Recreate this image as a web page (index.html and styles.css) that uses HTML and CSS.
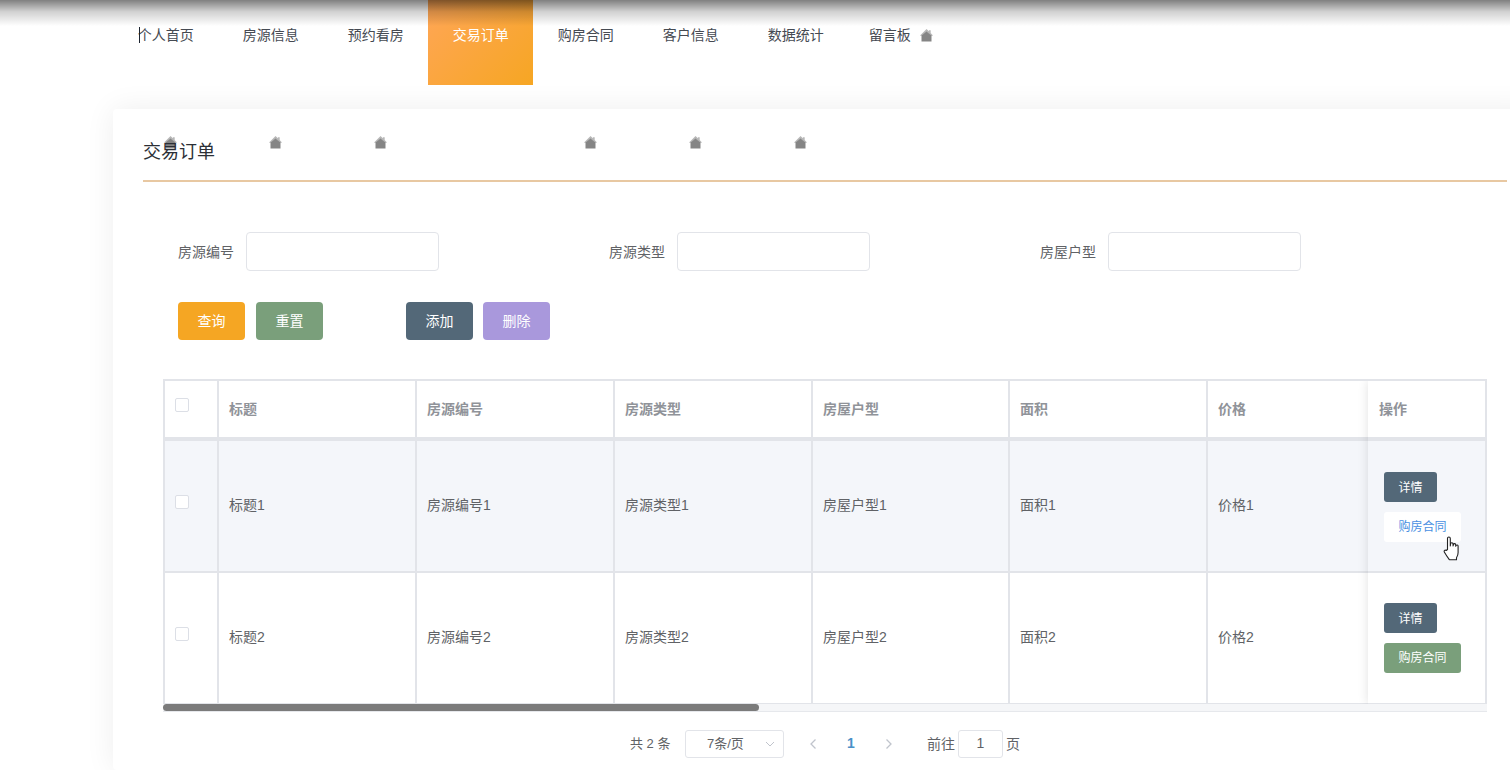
FILE: index.html
```html
<!DOCTYPE html>
<html lang="en">
<head>
  <meta charset="UTF-8">
  <title>交易订单</title>
  <link rel="stylesheet" href="styles.css">
</head>
<body>

  <!-- Navigation Bar -->
  <div class="navbar">
    <a href="#">个人首页</a>
    <a href="#">房源信息</a>
    <a href="#">预约看房</a>
    <a href="#" class="active">交易订单</a>
    <a href="#">购房合同</a>
    <a href="#">客户信息</a>
    <a href="#">数据统计</a>
    <a href="#">留言板<svg class="house nav-house" viewBox="0 0 13 13"><path class="roof" d="M6.5 0 9 2.300V1.200h1.700v2.700L13 6.500 11.500 7 6.500 3 1.500 7 0 6.500z"/><path class="walls" d="M1.500 6.500 6.500 2.500l5 4V12.500H1.500z"/></svg></a>
  </div>
  <div class="top-shade"></div>
  <div class="caret"></div>

  <div class="card">
    <!-- Stray menu icons -->
    <div class="icon-strip">
      <svg class="house" viewBox="0 0 13 13"><path class="roof" d="M6.5 0 9 2.300V1.200h1.700v2.700L13 6.500 11.500 7 6.500 3 1.500 7 0 6.500z"/><path class="walls" d="M1.500 6.500 6.500 2.500l5 4V12.500H1.500z"/></svg>
      <svg class="house" viewBox="0 0 13 13"><path class="roof" d="M6.5 0 9 2.300V1.200h1.700v2.700L13 6.500 11.500 7 6.500 3 1.500 7 0 6.500z"/><path class="walls" d="M1.500 6.500 6.500 2.500l5 4V12.500H1.500z"/></svg>
      <svg class="house" viewBox="0 0 13 13"><path class="roof" d="M6.5 0 9 2.300V1.200h1.700v2.700L13 6.500 11.500 7 6.500 3 1.500 7 0 6.500z"/><path class="walls" d="M1.500 6.500 6.500 2.500l5 4V12.500H1.500z"/></svg>
      <span class="house-gap"></span>
      <svg class="house" viewBox="0 0 13 13"><path class="roof" d="M6.5 0 9 2.300V1.200h1.700v2.700L13 6.500 11.500 7 6.500 3 1.500 7 0 6.500z"/><path class="walls" d="M1.500 6.500 6.500 2.500l5 4V12.500H1.500z"/></svg>
      <svg class="house" viewBox="0 0 13 13"><path class="roof" d="M6.5 0 9 2.300V1.200h1.700v2.700L13 6.500 11.500 7 6.500 3 1.500 7 0 6.500z"/><path class="walls" d="M1.500 6.500 6.500 2.500l5 4V12.500H1.500z"/></svg>
      <svg class="house" viewBox="0 0 13 13"><path class="roof" d="M6.5 0 9 2.300V1.200h1.700v2.700L13 6.500 11.500 7 6.500 3 1.500 7 0 6.500z"/><path class="walls" d="M1.500 6.500 6.500 2.500l5 4V12.500H1.500z"/></svg>
    </div>

    <h1 class="title">交易订单</h1>

    <div class="search-form">
      <div class="field"><label>房源编号</label><input type="text"></div>
      <div class="field"><label>房源类型</label><input type="text"></div>
      <div class="field"><label>房屋户型</label><input type="text"></div>
    </div>

    <div class="actions">
      <button class="btn btn-orange">查询</button>
      <button class="btn btn-green">重置</button>
      <button class="btn btn-slate push">添加</button>
      <button class="btn btn-purple">删除</button>
    </div>

    <div class="table-box">
      <div class="table-wrap">
        <table class="data-table">
          <colgroup>
            <col class="col-check"><col class="col-wide"><col class="col-wide"><col class="col-wide">
            <col class="col-area"><col class="col-wide"><col class="col-wide">
          </colgroup>
          <thead>
            <tr>
              <th class="check-cell"><span class="checkbox"></span></th>
              <th>标题</th><th>房源编号</th><th>房源类型</th><th>房屋户型</th><th>面积</th><th>价格</th>
            </tr>
          </thead>
          <tbody>
            <tr class="hover">
              <td class="check-cell"><span class="checkbox"></span></td>
              <td>标题1</td><td>房源编号1</td><td>房源类型1</td><td>房屋户型1</td><td>面积1</td><td>价格1</td>
            </tr>
            <tr>
              <td class="check-cell"><span class="checkbox"></span></td>
              <td>标题2</td><td>房源编号2</td><td>房源类型2</td><td>房屋户型2</td><td>面积2</td><td>价格2</td>
            </tr>
          </tbody>
        </table>

        <!-- Fixed right column -->
        <div class="fixed-col">
          <div class="fixed-head">操作</div>
          <div class="fixed-row hover">
            <button class="mini mini-slate">详情</button>
            <button class="mini mini-white">购房合同</button>
          </div>
          <div class="fixed-row">
            <button class="mini mini-slate">详情</button>
            <button class="mini mini-green">购房合同</button>
          </div>
        </div>
      </div>
      <div class="scrollbar"><div class="thumb"></div></div>

      <svg class="hand" viewBox="0 0 18 25">
        <path d="M5.500 13.500V2.500C5.500 1.600 6.100 1 6.900 1s1.400.6 1.400 1.500V10l.3-2.200c.2-1.600 2.400-1.400 2.400.2l.1 2 .3-1.400c.3-1.400 2.300-1.200 2.300.3v1.400l.4-.8c.5-.9 2-.6 2 .6v6.400c0 3-.8 4.100-1.600 5.200v2H7.500c-1-1.300-3-3.600-5.200-7.600-.7-1.300.7-2.600 1.900-1.600z" fill="#fff" stroke="#222" stroke-width="1.100" stroke-linejoin="round"/>
      </svg>
    </div>

    <div class="pagination">
      <span class="total">共 2 条</span>
      <div class="page-size">7条/页<svg class="chevron" viewBox="0 0 10 6"><path d="M1 1l4 4 4-4" fill="none" stroke="#c0c4cc" stroke-width="1"/></svg></div>
      <svg class="arrow" viewBox="0 0 8 12"><path d="M6.500 1.500 2 6l4.500 4.500" fill="none" stroke="#c0c4cc" stroke-width="1.300"/></svg>
      <span class="page-num">1</span>
      <svg class="arrow" viewBox="0 0 8 12"><path d="M1.500 1.500 6 6l-4.500 4.500" fill="none" stroke="#c0c4cc" stroke-width="1.300"/></svg>
      <span class="goto">前往</span>
      <div class="page-input">1</div>
      <span class="page-unit">页</span>
    </div>
  </div>

</body>
</html>
```

FILE: styles.css
```css
* {
  box-sizing: border-box;
  margin: 0;
  padding: 0;
  font-family: 'Liberation Sans', 'Noto Sans CJK SC', sans-serif;
}

html, body {
  height: 770px;
  overflow: hidden;
  background: #fff;
}

/* Navigation Bar */
.navbar {
  display: flex;
  height: 85px;
  padding-left: 113.3px;
}

.navbar a {
  display: block;
  width: 105px;
  height: 85px;
  line-height: 70px;
  text-align: center;
  font-size: 14px;
  color: #454a52;
  text-decoration: none;
}

.navbar a.active {
  color: #fff;
  background: linear-gradient(135deg, #ffa657, #f6a623);
}

.top-shade {
  position: absolute;
  top: 0;
  left: 0;
  width: 100%;
  height: 26px;
  background: linear-gradient(to bottom, rgba(0, 0, 0, 0.5), rgba(0, 0, 0, 0.18) 45%, rgba(0, 0, 0, 0));
  pointer-events: none;
}

.caret {
  position: absolute;
  top: 27px;
  left: 139px;
  width: 1px;
  height: 16px;
  background: #1c2430;
}

/* House icons */
.house {
  width: 13px;
  height: 13px;
  display: block;
}

.house .roof {
  fill: #b8b8b8;
}

.house .walls {
  fill: #858585;
}

.nav-house {
  display: inline-block;
  margin-left: 9px;
  vertical-align: -2px;
}

.icon-strip {
  position: absolute;
  top: 27px;
  left: 51px;
  display: flex;
  gap: 92px;
}

.house-gap {
  width: 13px;
}

/* Card */
.card {
  position: relative;
  width: 1424px;
  height: 661px;
  margin: 24px 0 0 113px;
  padding: 0 30px;
  background: #fff;
  border-radius: 4px;
  box-shadow: 0 0 30px rgba(0, 0, 0, 0.07);
}

.title {
  position: relative;
  height: 73px;
  padding-top: 29px;
  border-bottom: 2px solid #e8c8a2;
  font-size: 18px;
  line-height: 29px;
  font-weight: normal;
  color: #2b2f36;
}

.search-form {
  display: flex;
  gap: 170px;
  margin-top: 50px;
  padding-left: 35px;
}

.field {
  display: flex;
  align-items: center;
  gap: 12px;
}

.field label {
  width: 56px;
  margin-bottom: 2px;
  font-size: 14px;
  color: #606266;
}

.field input {
  width: 193px;
  height: 39px;
  border: 1px solid #e2e4e9;
  border-radius: 4px;
  background: #fff;
}

.actions {
  display: flex;
  gap: 11px;
  margin-top: 31px;
  padding-left: 35px;
}

.btn {
  width: 67px;
  height: 38px;
  padding-bottom: 2px;
  border: none;
  border-radius: 4px;
  color: #fff;
  font-size: 14px;
}

.btn.push {
  margin-left: 72px;
}

.btn-orange { background: #f5a623; }
.btn-green { background: #7a9f7b; }
.btn-slate { background: #536878; }
.btn-purple { background: #a998dc; margin-left: -1px; }

/* Table */
.table-box {
  position: relative;
  width: 1324px;
  margin: 39px 0 0 20px;
}

.table-wrap {
  position: relative;
  height: 325px;
  overflow: hidden;
  border-top: 2px solid #e2e4e9;
  border-left: 2px solid #e2e4e9;
  border-right: 2px solid #e2e4e9;
}

.data-table {
  width: 1241px;
  table-layout: fixed;
  border-collapse: separate;
  border-spacing: 0;
  font-size: 14px;
}

.col-check { width: 54px; }
.col-wide { width: 198px; }
.col-area { width: 197px; }

.data-table th,
.data-table td {
  padding-left: 10px;
  text-align: left;
  border-right: 2px solid #e2e4e9;
}

.data-table th {
  height: 60px;
  padding-bottom: 2px;
  color: #909399;
  font-weight: bold;
  border-bottom: 4px solid #e2e4e9;
}

.data-table td {
  height: 132px;
  padding-bottom: 4px;
  color: #606266;
  border-bottom: 2px solid #e2e4e9;
}

.data-table th.check-cell,
.data-table td.check-cell {
  padding: 0 19px 0 0;
  text-align: center;
}

.data-table td.check-cell {
  padding-bottom: 1px;
}

.checkbox {
  display: inline-block;
  width: 14px;
  height: 14px;
  margin-bottom: 8px;
  background: #fff;
  border: 1px solid #dcdfe6;
  border-radius: 2px;
  vertical-align: middle;
}

.hover td,
.fixed-row.hover {
  background: #f4f6fa;
}

.fixed-col {
  position: absolute;
  top: 0;
  right: 0;
  width: 117px;
  height: 323px;
  background: #fff;
  box-shadow: 0 0 10px rgba(0, 0, 0, 0.12);
}

.fixed-head {
  height: 60px;
  padding-left: 11px;
  line-height: 56px;
  font-size: 14px;
  font-weight: bold;
  color: #909399;
  border-bottom: 4px solid #e2e4e9;
}

.fixed-row {
  display: flex;
  flex-direction: column;
  align-items: flex-start;
  justify-content: center;
  gap: 10px;
  height: 132px;
  padding-left: 16px;
  border-bottom: 2px solid #e2e4e9;
}

.fixed-row.hover {
  padding-top: 2px;
}

.mini {
  height: 30px;
  padding: 0 14.5px 1px;
  border: none;
  border-radius: 3px;
  font-size: 12px;
  color: #fff;
}

.mini-slate { background: #536878; }
.mini-green { background: #7a9f7b; padding-bottom: 3px; }
.mini-white { background: #fff; color: #4a90e2; padding-bottom: 3px; }

.scrollbar {
  height: 8px;
  background: #f5f6f8;
  border-bottom: 1px solid #e6e8ec;
}

.thumb {
  width: 596px;
  height: 7px;
  background: #7b7b7b;
  border-radius: 4px;
}

.hand {
  position: absolute;
  top: 157px;
  left: 1279px;
  width: 18px;
  height: 25px;
}

/* Pagination */
.pagination {
  display: flex;
  align-items: center;
  justify-content: center;
  height: 28px;
  margin: 18px 0 0 20px;
  width: 1324px;
  font-size: 13px;
  color: #606266;
}

.total {
  width: 41px;
  padding-bottom: 3px;
  white-space: nowrap;
}

.page-size {
  position: relative;
  width: 99px;
  height: 28px;
  margin: 0 25px 0 14px;
  padding-left: 21px;
  line-height: 25px;
  border: 1px solid #e2e4e9;
  border-radius: 3px;
}

.chevron {
  position: absolute;
  top: 10px;
  right: 8px;
  width: 10px;
  height: 6px;
}

.arrow {
  width: 8px;
  height: 12px;
}

.page-num {
  width: 68px;
  padding-bottom: 2px;
  text-align: center;
  font-size: 14px;
  font-weight: bold;
  color: #4a90c8;
}

.goto {
  margin-left: 34px;
  padding-bottom: 2px;
  font-size: 14px;
}

.page-input {
  width: 45px;
  height: 28px;
  margin: 0 3px;
  line-height: 25px;
  text-align: center;
  font-size: 14px;
  border: 1px solid #e2e4e9;
  border-radius: 3px;
}

.page-unit {
  padding-bottom: 2px;
  font-size: 14px;
}
```
